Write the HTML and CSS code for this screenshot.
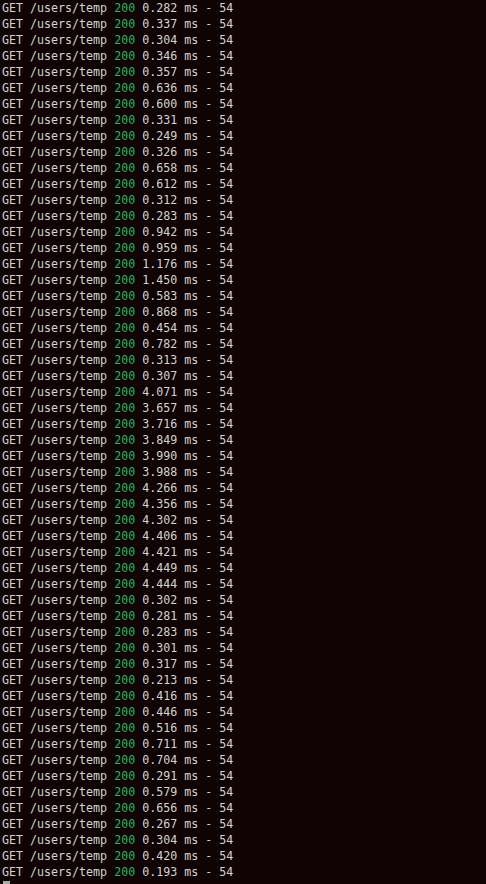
FILE: index.html
```html
<!DOCTYPE html>
<html lang="en">
<head>
    <meta charset="UTF-8">
    <meta name="viewport" content="width=device-width, initial-scale=1.0">
    <title>Terminal</title>
    <link rel="stylesheet" href="styles.css">
</head>
<body>
    <div class="terminal" id="terminal"></div>
    <script src="script.js"></script>
</body>
</html>
```

FILE: styles.css
```css
html, body {
    margin: 0;
    padding: 0;
    background: #0f0304;
    height: 100%;
    overflow: hidden;
}

.terminal {
    font-family: "DejaVu Sans Mono", monospace;
    font-size: 11.65px;
    line-height: 16px;
    color: #d3d3d3;
    padding: 0 0 0 2px;
    white-space: pre;
}

.line {
    height: 16px;
}

.ok {
    color: #27b463;
}

.cursor {
    display: inline-block;
    width: 7px;
    height: 13px;
    margin-top: 1px;
    margin-left: 1px;
    background: #a9a9a9;
    vertical-align: top;
}
```

FILE: script.js
```js
// request timings from the dev server log
const times = [
    '0.282', '0.337', '0.304', '0.346', '0.357', '0.636', '0.600', '0.331',
    '0.249', '0.326', '0.658', '0.612', '0.312', '0.283', '0.942', '0.959',
    '1.176', '1.450', '0.583', '0.868', '0.454', '0.782', '0.313', '0.307',
    '4.071', '3.657', '3.716', '3.849', '3.990', '3.988', '4.266', '4.356',
    '4.302', '4.406', '4.421', '4.449', '4.444', '0.302', '0.281', '0.283',
    '0.301', '0.317', '0.213', '0.416', '0.446', '0.516', '0.711', '0.704',
    '0.291', '0.579', '0.656', '0.267', '0.304', '0.420', '0.193'
];

const terminal = document.getElementById('terminal');

times.forEach(t => {
    const line = document.createElement('div');
    line.className = 'line';
    line.innerHTML = `GET /users/temp <span class="ok">200</span> ${t} ms - 54`;
    terminal.appendChild(line);
});

const last = document.createElement('div');
last.className = 'line';
last.innerHTML = '<span class="cursor"></span>';
terminal.appendChild(last);
```
